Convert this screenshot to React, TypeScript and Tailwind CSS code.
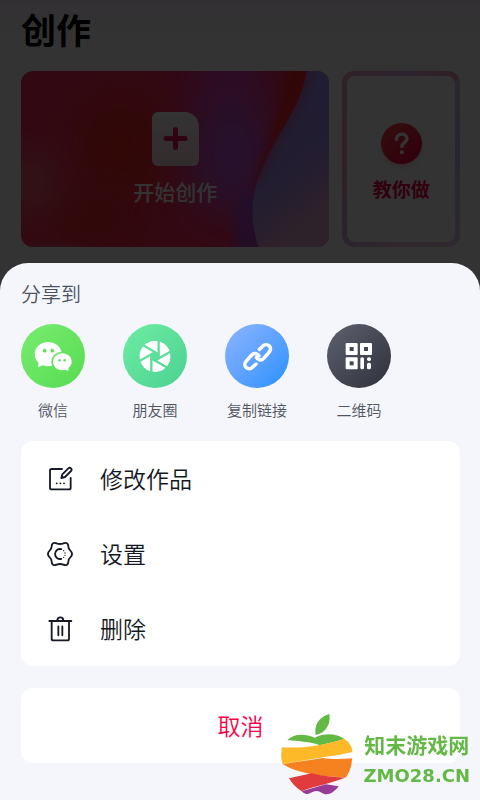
import type { ReactNode } from "react";

const FONT = "font-['Noto_Sans_CJK_SC',sans-serif]";

function CardArtwork() {
  return (
    <svg className="absolute inset-0 h-full w-full" viewBox="0 0 309 176" preserveAspectRatio="none" aria-hidden="true">
      <defs>
        <filter id="soft" x="-80%" y="-80%" width="260%" height="260%">
          <feGaussianBlur stdDeviation="20" />
        </filter>
        <filter id="edge" x="-20%" y="-40%" width="140%" height="180%">
          <feGaussianBlur stdDeviation="4" />
        </filter>
        <linearGradient id="wave" x1="0" y1="0" x2="0.35" y2="1">
          <stop offset="0" stopColor="#b484ee" />
          <stop offset="0.35" stopColor="#a08cf4" />
          <stop offset="0.7" stopColor="#aa90ec" />
          <stop offset="1" stopColor="#e6a8d0" />
        </linearGradient>
      </defs>
      <rect width="309" height="176" fill="#fa2c60" />
      <ellipse cx="100" cy="75" rx="46" ry="50" fill="#f42a1c" filter="url(#soft)" />
      <ellipse cx="70" cy="150" rx="50" ry="30" fill="#f42a28" filter="url(#soft)" />
      <ellipse cx="8" cy="112" rx="24" ry="28" fill="#ee7c84" filter="url(#soft)" />
      <ellipse cx="34" cy="188" rx="44" ry="12" fill="#c080b8" filter="url(#edge)" />
      <ellipse cx="208" cy="15" rx="34" ry="46" fill="#d83cc0" filter="url(#soft)" />
      <ellipse cx="212" cy="85" rx="42" ry="58" fill="#bc54dc" filter="url(#soft)" />
      <ellipse cx="228" cy="160" rx="14" ry="40" fill="#8050f8" filter="url(#edge)" opacity="0.6" />
      <path d="M268 -10 L294 -10 C285 40 258 76 243 104 L235 120 C240 90 260 50 268 -10Z" fill="#f42020" filter="url(#edge)" />
      <path d="M286 0 C282 34 257 62 246 88 C228 125 229 150 238 176 L309 176 L309 0Z" fill="url(#wave)" />
      <path d="M286 0 C282 34 257 62 246 88 C242 97 239 104 237 110" fill="none" stroke="#f03060" strokeWidth="5" filter="url(#edge)" opacity="0.7" />
    </svg>
  );
}

function NewFileIcon() {
  return (
    <svg className="h-[54px] w-[47px]" viewBox="0 0 47 54" aria-hidden="true">
      <defs>
        <linearGradient id="paper" x1="0" y1="0" x2="0" y2="1">
          <stop offset="0" stopColor="#fff" />
          <stop offset="1" stopColor="#ffd8e0" />
        </linearGradient>
      </defs>
      <path d="M6 0H34C41 1 46 6 47 13V48a6 6 0 0 1-6 6H6a6 6 0 0 1-6-6V6a6 6 0 0 1 6-6Z" fill="url(#paper)" />
      <path d="M23.500 17.500V35.500M14 26.500H33" stroke="#e8105c" strokeWidth="5" strokeLinecap="round" />
    </svg>
  );
}

function HelpIcon() {
  return (
    <svg className="size-[41px] overflow-visible" viewBox="0 0 41 41" aria-hidden="true">
      <defs>
        <linearGradient id="help" x1="0" y1="0" x2="0.8" y2="1">
          <stop offset="0" stopColor="#ff4a40" />
          <stop offset="1" stopColor="#f50046" />
        </linearGradient>
        <filter id="helpGlow" x="-30%" y="-30%" width="160%" height="160%">
          <feGaussianBlur stdDeviation="3" />
        </filter>
      </defs>
      <circle cx="20.500" cy="24" r="19" fill="#ff7090" opacity="0.5" filter="url(#helpGlow)" />
      <circle cx="20.500" cy="20.500" r="20.500" fill="url(#help)" />
      <path d="M15.500 16.500C15.500 9.500 26 9.500 26 15.800C26 19.600 20.800 19.800 20.800 23.600" fill="none" stroke="#fff" strokeWidth="3.400" strokeLinecap="round" />
      <circle cx="20.800" cy="29.300" r="2" fill="#fff" />
    </svg>
  );
}

function WechatIcon() {
  return (
    <svg className="size-16" viewBox="16 27 192 192" aria-hidden="true">
      <path d="M97.500 81C75 81 57 96 57 117C57 128 61 137 69 143L67 153Q67 157 71 155L82 151C87 153 92 154 97.500 154C120 154 138 138 138 117C138 96 120 81 97.500 81Z" fill="#fff" />
      <circle cx="87" cy="107" r="5.500" fill="#5fe05b" />
      <circle cx="110" cy="107" r="5.500" fill="#5fe05b" />
      <path d="M140 115C156 115 168 126 168 140C168 148 164 154 158 158L159 165Q159 168 156 167L149 164C146 165 143 165 140 165C124 165 112 154 112 140C112 126 124 115 140 115Z" fill="#fff" stroke="#62e25f" strokeWidth="10" paintOrder="stroke" />
      <circle cx="131.500" cy="136" r="3.800" fill="#5fe05b" />
      <circle cx="147" cy="136" r="3.800" fill="#5fe05b" />
    </svg>
  );
}

function MomentsIcon() {
  return (
    <svg className="size-16" viewBox="-96 -97 192 192" aria-hidden="true">
      <mask id="blades">
        <circle r="47" fill="#fff" />
        <polygon points="11,-6.400 11,6.400 0,12.700 -11,6.400 -11,-6.400 0,-12.700" fill="#000" />
        {[0, 60, 120, 180, 240, 300].map((angle) => (
          <path key={angle} d="M11 -50V6" transform={`rotate(${angle})`} stroke="#000" strokeWidth="7" strokeLinecap="round" />
        ))}
      </mask>
      <circle r="47" fill="#fff" mask="url(#blades)" />
    </svg>
  );
}

function LinkIcon() {
  return (
    <svg className="size-16" viewBox="24 27 192 192" fill="none" stroke="#fff" strokeWidth="10.500" strokeLinecap="round" strokeLinejoin="round" aria-hidden="true">
      <path d="M127 103L138 93A13 13 0 0 1 157 111L140 130A13 13 0 0 1 118 127" />
      <path d="M117 147L106 157A13 13 0 0 1 87 139L104 120A13 13 0 0 1 126 123" />
    </svg>
  );
}

function QrIcon() {
  return (
    <svg className="size-16" viewBox="24 24 192 192" fill="#fff" aria-hidden="true">
      {[[80, 81], [123, 81], [80, 124]].map(([x, y]) => (
        <g key={`${x}-${y}`}>
          <rect x={x} y={y} width="36" height="36" rx="3" />
          <rect x={x + 12} y={y + 12} width="12" height="12" fill="#434753" />
        </g>
      ))}
      <rect x="124" y="124" width="11" height="36" rx="5" />
      <rect x="144" y="124" width="12" height="11" rx="5" />
      <rect x="144" y="140" width="12" height="20" rx="5" />
    </svg>
  );
}

const LINE = "size-[26px] shrink-0 overflow-visible fill-none stroke-[#161a26]";

function EditIcon() {
  return (
    <svg className={LINE} viewBox="111 108 78 78" strokeWidth="5.500" strokeLinecap="round" strokeLinejoin="round" aria-hidden="true">
      <path d="M156 117H125Q120 117 120 122V173Q120 178 125 178H177Q182 178 182 173V144" />
      <path d="M154 144L157 133L175 115Q179 111 183 115Q187 119 183 123L165 141Z" />
      <path d="M140 160h.1M151 160h.1M162 160h.1" />
    </svg>
  );
}

function GearIcon() {
  return (
    <svg className={LINE} viewBox="-39 -39 78 78" strokeWidth="5.500" strokeLinecap="round" strokeLinejoin="round" aria-hidden="true">
      <path d="M-10 -32Q0 -28 10 -32C19 -36 25 -31 25 -23Q25 -15 31 -10C38 -4 38 4 31 10Q25 15 25 23C25 31 19 36 10 32Q0 28 -10 32C-19 36 -25 31 -25 23Q-25 15 -31 10C-38 4 -38 -4 -31 -10Q-25 -15 -25 -23C-25 -31 -19 -36 -10 -32Z" />
      <path d="M4 -14.500A15 15 0 1 0 4 14.500" />
      <path d="M11 -10h.1M15 -3h.1M15 4h.1M11 10h.1" strokeWidth="4" />
    </svg>
  );
}

function TrashIcon() {
  return (
    <svg className={LINE} viewBox="111 258 78 78" strokeWidth="5.500" strokeLinecap="round" strokeLinejoin="round" aria-hidden="true">
      <path d="M118 273H184M125 273V326Q125 331 130 331H172Q177 331 177 326V273M142 272C142 259 160 259 160 272M145 289V316M157 289V316" />
    </svg>
  );
}

function AppleLogo() {
  return (
    <svg className="h-[84px] w-[74px]" viewBox="30 20 222 252" aria-hidden="true">
      <path d="M137 89C131 60 148 34 178 26C184 56 166 84 137 89Z" fill="#63b846" />
      <path d="M52 104C72 84 104 84 135 97C165 82 200 84 224 102L150 120C120 108 85 108 52 104Z" fill="#63b846" />
      <path d="M36 126C90 129 160 122 222 100C240 112 247 126 247 140C215 149 165 154 38 176C32 160 33 142 36 126Z" fill="#fdb928" />
      <path d="M38 176C85 169 130 163 158 158C190 163 220 161 246 159C246 180 239 200 228 216C160 216 75 202 38 176Z" fill="#f5821f" />
      <path d="M57 219L125 204C160 213 195 217 228 216C190 233 135 242 95 258C79 248 66 234 57 219Z" fill="#e13b3d" />
      <path d="M95 258L168 237L206 243C195 257 181 268 168 267C158 267 152 257 139 257C127 257 119 268 108 266Q101 264 95 258Z" fill="#973b96" />
    </svg>
  );
}

type Share = { label: string; tone: string; icon: ReactNode };
const shares: Share[] = [
  { label: "微信", tone: "from-[#78ec70] to-[#56dc51]", icon: <WechatIcon /> },
  { label: "朋友圈", tone: "from-[#6eeda2] to-[#4bd192]", icon: <MomentsIcon /> },
  { label: "复制链接", tone: "from-[#8cb4ff] to-[#1b90ff]", icon: <LinkIcon /> },
  { label: "二维码", tone: "from-[#5f636f] to-[#2f303c]", icon: <QrIcon /> },
];

const actions = [
  { label: "修改作品", icon: <EditIcon /> },
  { label: "设置", icon: <GearIcon /> },
  { label: "删除", icon: <TrashIcon /> },
];

export default function App() {
  return (
    <div className={`relative min-h-screen overflow-hidden bg-white ${FONT}`}>
      <main className="bg-linear-to-b from-[#fff0ff] to-white to-[40px] pt-1.5 pr-5 pl-[21px]">
        <h1 className="text-[35px] leading-[46px] font-bold text-black">创作</h1>
        <div className="mt-[19px] grid grid-cols-[21fr_8fr] gap-[13px]">
          <button type="button" className="relative h-44 overflow-hidden rounded-xl">
            <CardArtwork />
            <span className="relative flex flex-col items-center gap-[10px]">
              <NewFileIcon />
              <span className="text-[21px] leading-[30px] font-medium text-white">开始创作</span>
            </span>
          </button>
          <button
            type="button"
            className="h-44 rounded-xl bg-[conic-gradient(from_35deg,#d0c0f0,#c0bcf0_15%,#e8ccec_32%,#f0c4dc_42%,#d0b0e8_50%,#f09cac_62%,#f0a4bc_80%,#dcb0f0_92%,#f09cac)] p-[5px]"
          >
            <span className="flex h-full flex-col items-center justify-center gap-[10px] rounded-lg bg-white pt-2">
              <HelpIcon />
              <span className="text-[19px] leading-[30px] font-bold text-[#f0004c]">教你做</span>
            </span>
          </button>
        </div>
      </main>

      <div className="fixed inset-0 bg-black/80" />

      <section role="dialog" aria-label="分享到" className="fixed inset-x-0 bottom-0 rounded-t-[28px] bg-[#f5f6fb] pt-4 pr-5 pb-[37px] pl-[21px]">
        <h2 className="text-[20px] leading-[30px] font-[350] text-[#4b515e]">分享到</h2>
        <div className="mt-[15px] flex gap-[38px]">
          {shares.map((share) => (
            <button key={share.label} type="button" className="flex w-16 flex-col items-center gap-3">
              <span className={`size-16 rounded-full bg-linear-to-br ${share.tone}`}>{share.icon}</span>
              <span className="text-[15px] leading-5 font-[350] whitespace-nowrap text-[#4f5562]">{share.label}</span>
            </button>
          ))}
        </div>
        <div className="mt-[21px] overflow-hidden rounded-xl bg-white">
          {actions.map((action) => (
            <button key={action.label} type="button" className="flex h-[75px] w-full items-center gap-[27px] px-[26px]">
              {action.icon}
              <span className="pb-[2px] text-[23px] leading-8 font-[350] text-[#141824]">{action.label}</span>
            </button>
          ))}
        </div>
        <button type="button" className="mt-[22px] h-[75px] w-full rounded-xl bg-white pb-[2px] text-[23px] leading-8 font-[350] text-[#fa0046]">
          取消
        </button>
      </section>

      <aside className="pointer-events-none fixed right-[10px] bottom-1 flex items-center gap-[10px] text-[#63b846]">
        <AppleLogo />
        <div className="flex flex-col items-center pt-3">
          <span className="text-[21px] leading-[31px] font-bold">知末游戏网</span>
          <span className="font-['DejaVu_Sans',sans-serif] text-[18px] leading-[31px] font-bold">ZMO28.CN</span>
        </div>
      </aside>
    </div>
  );
}
